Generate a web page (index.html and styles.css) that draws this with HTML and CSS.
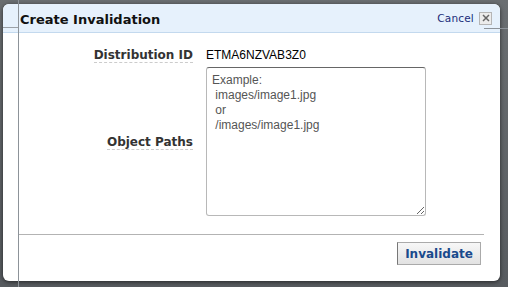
FILE: index.html
```html
<!DOCTYPE html>
<html>
<head>
<meta charset="utf-8">
<link rel="stylesheet" href="styles.css">
</head>
<body>
<div class="backdrop">
  <div class="dialog">
    <div class="header">
      <div class="title">Create Invalidation</div>
      <div class="actions">
        <a class="cancel" href="#">Cancel</a>
        <span class="close">
          <svg width="8" height="8" viewBox="0 0 8 8"><path d="M1 1L7 7M7 1L1 7" stroke="#666" stroke-width="1.5"/></svg>
        </span>
      </div>
    </div>
    <div class="content">
      <div class="form">
        <div class="label"><span>Distribution ID</span></div>
        <div class="value">ETMA6NZVAB3Z0</div>
        <div class="label center"><span>Object Paths</span></div>
        <div class="value"><textarea class="paths" placeholder="Example:&#10; images/image1.jpg&#10; or&#10; /images/image1.jpg"></textarea></div>
      </div>
    </div>
    <div class="footer">
      <button class="btn">Invalidate</button>
    </div>
  </div>
  <div class="guide-v"></div>
  <div class="guide-h1"></div>
  <div class="guide-h2"></div>
</div>
</body>
</html>
```
FILE: styles.css
```css
html, body {
  margin: 0;
  padding: 0;
}
body {
  width: 508px;
  height: 287px;
  overflow: hidden;
  background: #5b6064;
  font-family: "DejaVu Sans", Verdana, sans-serif;
}
.backdrop {
  position: relative;
  width: 508px;
  height: 287px;
  padding: 4px 0 0 3px;
  box-sizing: border-box;
  background: linear-gradient(#6a6e71, #575b5f);
}
.dialog {
  width: 497px;
  height: 277px;
  background: #fff;
  border-radius: 6px;
  box-shadow: 0 1px 4px rgba(0,0,0,0.6);
  display: flex;
  flex-direction: column;
  overflow: hidden;
}
.header {
  height: 28px;
  background: #e6f1fc;
  border-bottom: 1px solid #c3d9ee;
  display: flex;
  align-items: center;
  justify-content: space-between;
  padding: 0 8px 0 17px;
  flex: none;
}
.title {
  font-weight: bold;
  font-size: 13px;
  color: #111;
  padding-top: 2px;
}
.actions {
  display: flex;
  align-items: center;
  gap: 5px;
}
.cancel {
  font-size: 10.5px;
  color: #1a2d7a;
  text-decoration: none;
  letter-spacing: 0.2px;
}
.close {
  width: 11px;
  height: 11px;
  border: 1px solid #b5b5b5;
  background: #ececec;
  display: flex;
  align-items: center;
  justify-content: center;
  box-sizing: content-box;
}
.content {
  flex: 1;
  padding: 15px 0 0 0;
}
.form {
  display: grid;
  grid-template-columns: 190px 220px;
  column-gap: 13px;
  row-gap: 5px;
  align-items: center;
}
.label {
  text-align: right;
  font-weight: bold;
  font-size: 12px;
  color: #333;
}
.label span {
  border-bottom: 1px dashed #ccc;
  padding-bottom: 0;
}
.value {
  font-family: "Liberation Sans", Arial, sans-serif;
  font-size: 12px;
  color: #000;
}
.paths {
  display: block;
  width: 220px;
  height: 149px;
  box-sizing: border-box;
  border: 1px solid #b8b8b8;
  border-top-color: #666;
  border-radius: 3px;
  padding: 5px 5px 1px;
  font-family: "Liberation Sans", Arial, sans-serif;
  font-size: 12px;
  line-height: 15px;
  resize: vertical;
  margin: 0;
}
.paths::placeholder {
  color: #555;
}
.footer {
  flex: none;
  margin: 0 16px 0 15px;
  border-top: 1px solid #b3b3b3;
  height: 47px;
  display: flex;
  justify-content: flex-end;
  align-items: flex-start;
  padding-top: 7px;
  box-sizing: border-box;
}
.btn {
  margin-right: 3px;
  width: 84px;
  height: 23px;
  border: 1px solid #aaa;
  border-left-color: #777;
  background: linear-gradient(#f7f7f7, #e2e2e2);
  font-family: "DejaVu Sans", Verdana, sans-serif;
  font-weight: bold;
  font-size: 12px;
  color: #1a4a8c;
  padding: 0;
}
.guide-v {
  position: absolute;
  left: 18px;
  top: 0;
  width: 1px;
  height: 287px;
  background: #8d9399;
}
.guide-h1 {
  position: absolute;
  left: 3px;
  top: 27px;
  width: 15px;
  height: 1px;
  background: #9aa0a6;
}
.guide-h2 {
  position: absolute;
  left: 484px;
  top: 28px;
  width: 24px;
  height: 1px;
  background: #8d9399;
}
```
